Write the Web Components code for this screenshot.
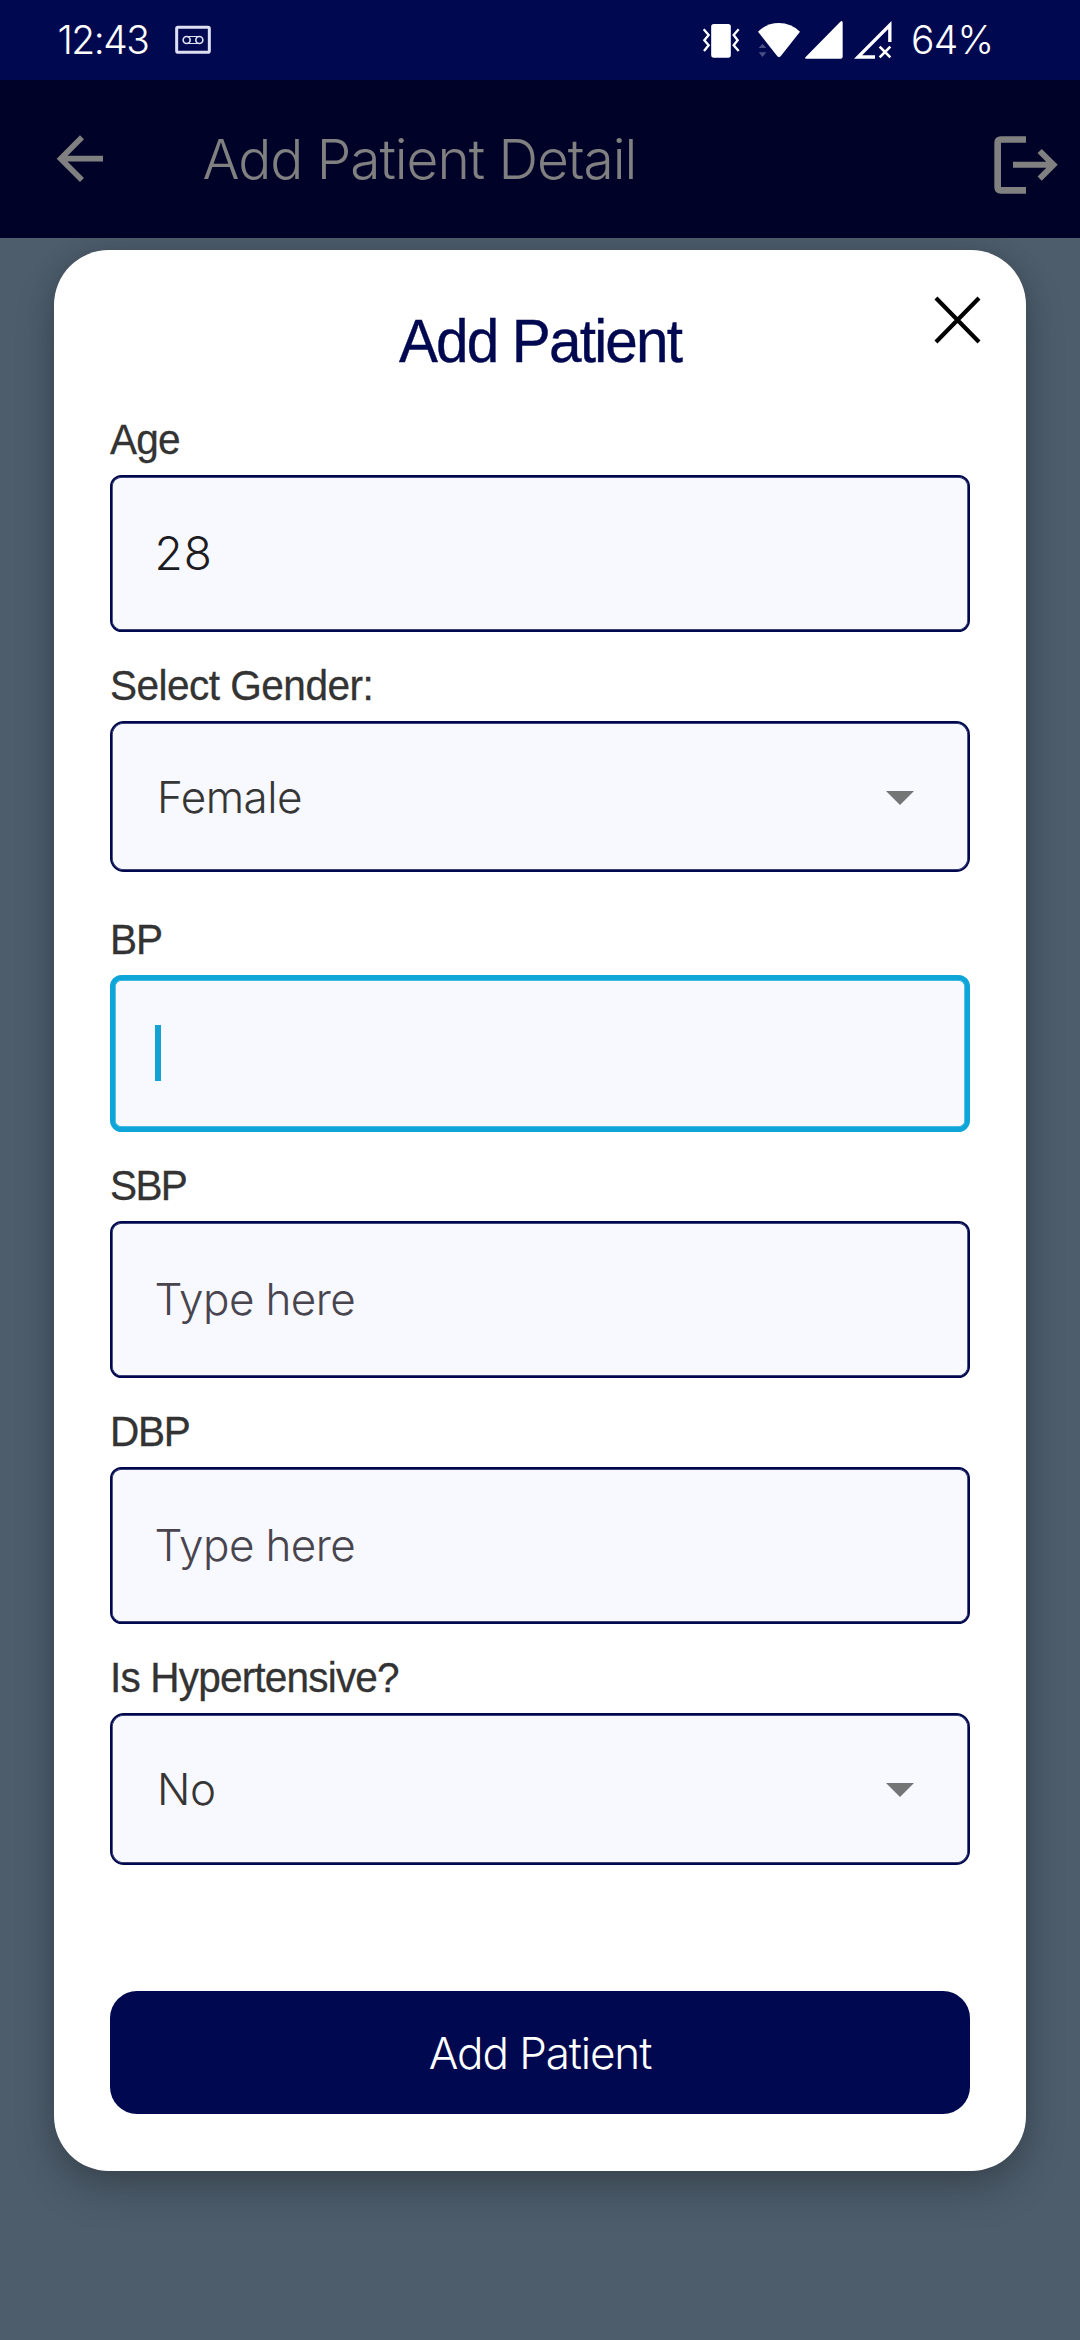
<!DOCTYPE html>
<html lang="en">
<head>
<meta charset="utf-8">
<title>Add Patient</title>
<style>
html,body{margin:0;height:100%}
body{background:#4d5d6c;font-family:Inter,"Liberation Sans",sans-serif;font-weight:300;overflow:hidden}
</style>
</head>
<body>
<patient-screen></patient-screen>
<script>
const define = (name, html, setup) => customElements.define(name, class extends HTMLElement {
  connectedCallback() {
    if (this.shadowRoot) return;
    const root = this.attachShadow({ mode: 'open' });
    root.innerHTML = html;
    if (setup) setup(this, root);
  }
});

// System status bar: clock, notification and signal icons
define('status-bar', `
<style>
:host{display:flex;align-items:center;height:80px;box-sizing:border-box;padding:0 79px 0 57.5px;background:#000850;color:#fff;font-size:39px;line-height:80px;font-weight:340}
svg{display:block;flex:none}
.clock{width:117.5px;letter-spacing:-1.5px;white-space:nowrap}
.right{display:flex;align-items:center;margin-left:auto}
.wifi{margin:0 3px 0 15px}
.nosim{margin:0 18.5px 0 9px}
.pct{width:90px;letter-spacing:-.74px}
</style>
<span class="clock">12:43</span>
<svg width="36" height="30" viewBox="525 75 108 90" fill="none" stroke="#dedff2">
<rect x="530" y="82" width="98" height="75" rx="4" stroke-width="9"/>
<circle cx="560" cy="120" r="10.5" stroke-width="5"/><circle cx="598" cy="120" r="10.5" stroke-width="5"/>
<path d="M560 109.500H598M560 130.500H598" stroke-width="3.500"/></svg>
<div class="right">
<svg width="40" height="40" viewBox="120 60 120 120"><rect x="150.500" y="72" width="59" height="101" rx="8" fill="#fff"/>
<path d="M128 88L143 105L130 121L143 136L129 153M233 88L218 105L230 121L218 136L233 153" fill="none" stroke="#fff" stroke-width="7"/></svg>
<svg class="wifi" width="45" height="40" viewBox="285 60 135 120"><path d="M293 144L304.500 131L316 144ZM293 157H316L304.500 171Z" fill="#4b4e85"/>
<path d="M291 95Q318 69 354 69T417 95L359 169Q354 174 349 169Z" fill="#fff"/></svg>
<svg width="40" height="40" viewBox="429 60 120 120"><path d="M434 171L538 65Q545 60 545 68V170Q545 176 539 176H436Q429 176 434 171Z" fill="#fff"/></svg>
<svg class="nosim" width="40" height="40" viewBox="576 60 120 120" fill="none" stroke="#fff"><path d="M642 171H591L686.500 75V126" stroke-width="10"/><path d="M656 140L688 172M688 140L656 172" stroke-width="8"/></svg>
<span class="pct">64%</span>
</div>`);

// Dimmed application bar
define('app-bar', `
<style>
:host{display:flex;align-items:center;height:158px;box-sizing:border-box;padding:0 19.5px 0 55.5px;background:#000228;color:#808080;position:relative;z-index:1}
svg{display:block;flex:none}
h1{margin:0 0 0 97px;font-size:55px;font-weight:320;line-height:80px;letter-spacing:-1.05px;flex:1}
.logout{margin-top:12px}
</style>
<svg width="50" height="52" viewBox="165 400 150 156" fill="none" stroke="currentColor" stroke-width="17"><path d="M243 413L179 477L243 541M182 477H306"/></svg>
<h1><slot></slot></h1>
<svg class="logout" width="70" height="64" viewBox="990 399 210 192" fill="none" stroke="currentColor"><path d="M1095 418.500H1020Q1010 418.500 1010 428.500V561Q1010 571 1020 571H1095" stroke-width="20"/><path d="M1056 494.500H1175M1136 453L1177.500 494.500L1136 536" stroke-width="18"/></svg>`);

const fieldStyle = `
:host{display:flex;flex-direction:column;gap:14px;--line:#00084d}
label{font:400 42.7px/44px "Liberation Sans",Arial,sans-serif;color:#333;letter-spacing:var(--track,-.6px);white-space:nowrap;transform:scaleX(.95);transform-origin:0 0;-webkit-text-stroke:.3px #333}
.box{display:flex;align-items:center;box-sizing:border-box;background:#f8f9fe;border:2px solid var(--line);box-shadow:inset 0 0 0 .67px var(--line);white-space:nowrap}`;

// Labelled text input
define('text-field', `
<style>${fieldStyle}
.box{height:157px;border-radius:11.5px;padding:0 0 2px 42.5px;font-size:44px;letter-spacing:-.6px;color:#49454f}
:host([filled]) .box{color:#1c1b1f;font-size:46px;letter-spacing:1px}
:host([focused]){--line:#0ea5d8}
:host([focused]) .box{border-width:5px;padding-left:40px}
i{display:none;width:6px;height:56px;background:#13a2d2}
:host([focused]) i{display:block}
</style>
<label></label><div class="box"><slot></slot><i></i></div>`,
(el, root) => { root.querySelector('label').textContent = el.getAttribute('label'); });

// Labelled drop-down
define('select-field', `
<style>${fieldStyle}
.box{height:var(--height,151px);border-radius:14px;justify-content:space-between;padding:0 54.5px 0 45px;font-size:44px;letter-spacing:-.5px;color:#363636}
svg{display:block;margin-top:2px}
</style>
<label></label><div class="box"><slot></slot><svg width="28" height="14" viewBox="0 0 28 14"><path d="M0 0H28L14 14Z" fill="#747577"/></svg></div>`,
(el, root) => { root.querySelector('label').textContent = el.getAttribute('label'); });

define('submit-button', `
<style>
:host{display:block}
button{display:block;width:100%;height:123px;margin:0;padding:0;border:0;border-radius:27px;background:#000850;color:#fff;font:inherit;font-size:44px;font-weight:340;letter-spacing:-1.1px}
</style><button><slot></slot></button>`);

// Modal card with title, close control and form body
define('modal-card', `
<style>
:host{display:flex;flex-direction:column;position:relative;box-sizing:border-box;width:972px;margin:12px auto 0;padding:51px 56px 57px;background:#fff;border-radius:55px;box-shadow:0 20px 42px rgba(0,0,0,.2),0 0 26px rgba(0,0,0,.13)}
h2{margin:0 0 36px;text-align:center;font:400 61.500px/80px "Liberation Sans",Arial,sans-serif;letter-spacing:-1.9px;color:#000850;transform:scaleX(.95);-webkit-text-stroke:.4px #000850}
svg{position:absolute;top:45px;right:45px}
</style>
<h2><slot name="title"></slot></h2>
<svg width="48" height="50" viewBox="0 0 48 50" stroke="#000" stroke-width="4.200"><path d="M3 3L46 47M46 3L3 47"/></svg>
<slot></slot>`);

define('patient-screen', `
<style>
:host{display:flex;flex-direction:column;width:1080px;height:2340px;background:#4d5d6c}
text-field,select-field{margin-bottom:31px}
.gender{margin-bottom:45px}
.last{margin-bottom:126px}
</style>
<status-bar></status-bar>
<app-bar>Add Patient Detail</app-bar>
<modal-card>
<span slot="title">Add Patient</span>
<text-field label="Age" filled style="--track:-.9px">28</text-field>
<select-field class="gender" label="Select Gender:" style="--track:-.55px">Female</select-field>
<text-field label="BP" focused style="--track:-1.200px"></text-field>
<text-field label="SBP" style="--track:-1.700px">Type here</text-field>
<text-field label="DBP" style="--track:-1.400px">Type here</text-field>
<select-field class="last" label="Is Hypertensive?" style="--track:-.87px;--height:152px">No</select-field>
<submit-button>Add Patient</submit-button>
</modal-card>`);
</script>
</body>
</html>
